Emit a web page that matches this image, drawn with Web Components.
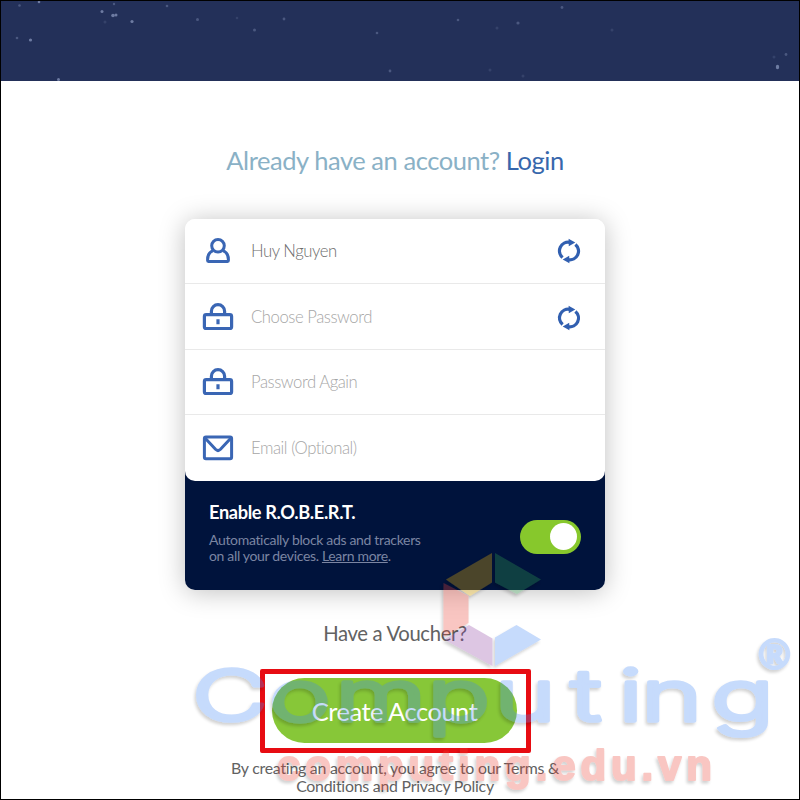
<!DOCTYPE html>
<html lang="en"><head><meta charset="utf-8"><title>Create Account</title>
<style>html,body{margin:0;background:#fff}</style></head><body>
<signup-page></signup-page>
<script>
const define=(name,html)=>{
  const t=document.createElement('template');t.innerHTML=html;
  customElements.define(name,class extends HTMLElement{
    constructor(){super();this.attachShadow({mode:'open'}).append(t.content.cloneNode(true));}
  });
};
const icons={
 user:`<svg width="32" height="32" viewBox="0 0 32 32" fill="none" stroke="#3a66b4" stroke-width="3"><circle cx="16" cy="10.800" r="6.3"/><path d="M11 15.700C7.500 17.100 5.600 20 5.600 24.500v1.100q0 .8.8.8h19.200q.8 0 .8-.8V24.500c0-4.500-1.900-7.400-5.400-8.800"/></svg>`,
 lock:`<svg width="32" height="32" viewBox="0 0 32 32" fill="none" stroke="#3a66b4" stroke-width="3.200"><rect x="2.400" y="13.700" width="27.200" height="13.800" rx="1.800"/><path d="M9.400 13.700V10.300a6.600 6.600 0 0 1 13.200 0v3.400"/><path d="M16 18.200v5"/></svg>`,
 mail:`<svg width="32" height="32" viewBox="0 0 32 32" fill="none" stroke="#3a66b4" stroke-width="3"><rect x="2.400" y="5" width="27.200" height="21.800" rx="1.500"/><path d="M3 6l10.500 11.300q2.500 2.500 5 0L29 6"/></svg>`
};
customElements.define('field-icon',class extends HTMLElement{
  constructor(){super();this.attachShadow({mode:'open'});}
  connectedCallback(){this.shadowRoot.innerHTML=`<style>:host{display:block;width:32px;height:32px}svg{display:block}</style>${icons[this.getAttribute('name')]}`;}
});
define('refresh-icon',`<style>:host{display:block;width:24px;height:26px}:host([low]){padding-top:2px}svg{display:block}</style>
<svg width="24" height="26" viewBox="0 0 24 26"><g fill="none" stroke="#315fb0" stroke-width="3.300"><path d="M5.600 19.500A8.700 8.700 0 0 1 12.800 4.300"/><path d="M18.400 6.500A8.700 8.700 0 0 1 11.200 21.700"/></g><g fill="#315fb0"><path d="M11.600.7L18.300 4.600 11.800 8.300z"/><path d="M12.400 25.300L5.700 21.400 12.200 17.700z"/></g></svg>`);
define('form-field',`<style>
:host{display:flex;align-items:center;height:65.400px;box-sizing:border-box;padding:0 24.500px 0 17px;border-bottom:1px solid #e9e9e9;font-size:16.700px;letter-spacing:-.45px;font-weight:300;color:#a6a6a6}
:host([filled]){color:#6d6d6d}:host([last]){border-bottom:0}
.t{flex:1;margin-left:17px;white-space:nowrap}</style>
<slot name="icon"></slot><div class="t"><slot></slot></div><slot name="action"></slot>`);
define('star-header',`<style>:host{display:block;height:80px;background:#233059}svg{display:block}</style>
<svg width="798" height="80" fill="#8795bb">
<g opacity=".75"><circle cx="101" cy="10.500" r="1.500"/><circle cx="112" cy="14.500" r="1.800"/><circle cx="115" cy="14" r="1.500"/><circle cx="131" cy="20.500" r="1.600"/><circle cx="29.500" cy="39" r="1.600"/><circle cx="57.500" cy="78.500" r="1.500"/><circle cx="38" cy="1" r="1.300"/><ellipse cx="776.500" cy="66" rx="1.700" ry="2.200"/></g>
<g opacity=".4"><circle cx="16" cy="37" r="1.300"/><circle cx="18.500" cy="4.500" r="1.300"/><circle cx="166" cy="5" r="1.300"/><circle cx="196.500" cy="18.500" r="1.500"/><circle cx="253.500" cy="29" r="1.500"/><circle cx="283" cy="18" r="1.400"/><circle cx="376" cy="32" r="1.300"/><circle cx="389" cy="70" r="1.400"/><circle cx="517" cy="22" r="1.600"/><circle cx="457" cy="19" r="1.300"/><circle cx="561" cy="6.500" r="1.400"/><circle cx="785" cy="53.500" r="1.400"/><circle cx="113" cy="3" r="1.200"/></g>
<g opacity=".18"><circle cx="496" cy="27" r="1.500"/><circle cx="611" cy="29" r="1.500"/><circle cx="773" cy="56" r="1.500"/><circle cx="522" cy="75" r="1.500"/><circle cx="489" cy="69" r="1.500"/><circle cx="236" cy="17" r="1.300"/><circle cx="104" cy="21" r="1.500"/></g></svg>`);
define('toggle-switch',`<style>:host{display:flex;align-items:center;justify-content:flex-end;box-sizing:border-box;width:61px;height:34px;padding:4px;border-radius:17px;background:#87c82c}i{width:27px;height:27px;border-radius:50%;background:#fff}</style><i></i>`);
define('robert-panel',`<style>
:host{display:flex;justify-content:space-between;box-sizing:border-box;height:109px;padding:19px 24px 0}
h3{margin:0;color:#fff;font:700 18.200px/24px Lato,sans-serif;letter-spacing:-.35px;white-space:nowrap}
p{margin:8px 0 0;color:#7b85a2;font-size:14px;letter-spacing:-.33px;line-height:16px;white-space:nowrap}u{text-underline-offset:1px}
toggle-switch{margin-top:20px}</style>
<div><h3>Enable R.O.B.E.R.T.</h3><p>Automatically block ads and trackers<br>on all your devices. <u>Learn more</u>.</p></div><toggle-switch></toggle-switch>`);
define('signup-card',`<style>
:host{display:block;width:420px;border-radius:10px;background:linear-gradient(transparent 50%,#00133c 50%);box-shadow:0 2px 26px rgba(0,0,0,.25)}
.f{background:#fff;border-radius:10px;overflow:hidden}</style><div class="f"><slot></slot></div><slot name="footer"></slot>`);
define('primary-button',`<style>
:host{display:flex;box-sizing:border-box;width:271px;height:84px;border:5px solid #e70c12;border-radius:2px;align-items:center;justify-content:center}
button{width:245px;height:65px;border:0;border-radius:33px;background:#87c738;color:#fff;font:400 25.500px Lato,sans-serif;letter-spacing:-.5px;padding:0;margin-right:2px}</style><button><slot></slot></button>`);
define('brand-watermark',`<style>:host{position:absolute;left:0;top:0;width:800px;height:800px;pointer-events:none}svg{display:block}</style>
<svg width="800" height="800"><defs><filter id="sh" x="-10%" y="-20%" width="120%" height="150%"><feDropShadow dx="-1.500" dy="2.500" stdDeviation="1.500" flood-color="#000" flood-opacity=".6"/></filter></defs>
<g opacity=".3" filter="url(#sh)">
<path fill="#fbbc05" d="M492 553v29.500L470 596 446 579.500z"/><path fill="#34a853" d="M495 553l46 26.500L517 594 495 582.500z"/><path fill="#ea4335" d="M443.500 583L468.500 596v27l-25 14z"/><path fill="#8c40a0" d="M444 639.500l25-14.500 23.500 13.500V666z"/><path fill="#4285f4" d="M495 666v-28.500L516.500 625 541 639.500z"/>
<g transform="scale(1.450 1)" fill="#4285f4" stroke="#4285f4" stroke-width="3.600" stroke-linejoin="round"><text y="721" font-family="Inter" font-weight="300" font-size="72" x="132.500 185.500 231.200 294.600 341 393.500 426.500 442 490.500">Computing</text></g>
<text x="758" y="669" font-family="Lato" font-weight="700" font-size="40" fill="#4285f4" stroke="#4285f4" stroke-width="2">®</text>
<text x="277" y="780" font-family="Liberation Sans" font-weight="700" font-size="42" textLength="435" lengthAdjust="spacing" fill="#ea4335" stroke="#ea4335" stroke-width="2" stroke-linejoin="round">computing.edu.vn</text>
</g></svg>`);
define('signup-page',`<style>
:host{display:block;position:relative;box-sizing:border-box;width:800px;height:800px;overflow:hidden;border:1px solid #000;background:#fff;font-family:Lato,sans-serif}
main{display:flex;flex-direction:column;align-items:center;width:788px;color:#626262}
.login{margin-top:63px;height:32px;line-height:32px;font-size:25.500px;letter-spacing:-.45px;color:#8ab1c6;white-space:nowrap}.login b{font-weight:400;color:#3767ac}
signup-card{margin-top:43px}.v{margin-top:30px;height:26px;line-height:26px;font-size:20.300px;letter-spacing:-.35px;white-space:nowrap}
primary-button{margin:23px 0 0 1px}.legal{margin-top:6px;font-size:15.900px;letter-spacing:-.25px;line-height:18px;text-align:center;white-space:nowrap}
brand-watermark{left:-1px;top:-1px}</style>
<star-header></star-header><main>
<div class="login">Already have an account? <b>Login</b></div>
<signup-card>
<form-field filled><field-icon slot="icon" name="user"></field-icon>Huy Nguyen<refresh-icon slot="action"></refresh-icon></form-field>
<form-field><field-icon slot="icon" name="lock"></field-icon>Choose Password<refresh-icon low slot="action"></refresh-icon></form-field>
<form-field><field-icon slot="icon" name="lock"></field-icon>Password Again</form-field>
<form-field last><field-icon slot="icon" name="mail"></field-icon>Email (Optional)</form-field>
<robert-panel slot="footer"></robert-panel></signup-card>
<div class="v">Have a Voucher?</div>
<primary-button>Create Account</primary-button>
<div class="legal">By creating an account, you agree to our Terms &amp;<br>Conditions and Privacy Policy</div>
</main><brand-watermark></brand-watermark>`);
</script></body></html>
